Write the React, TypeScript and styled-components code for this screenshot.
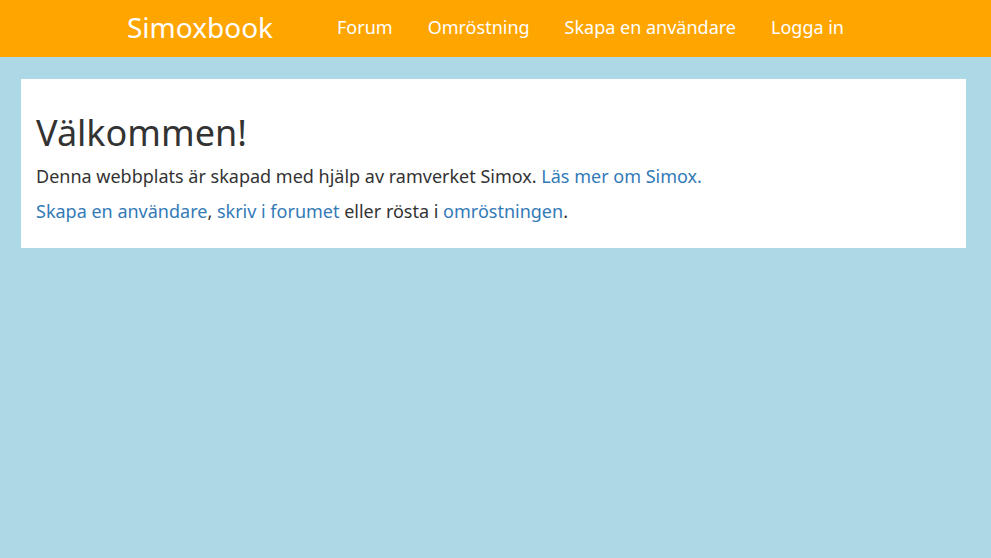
import styled, { createGlobalStyle } from "styled-components";

const GlobalStyle = createGlobalStyle`
  body {
    margin: 0;
    background: lightblue;
    font-family: "Noto Sans", "Open Sans", sans-serif;
    color: #333;
  }
`;

const Navbar = styled.nav`
  background: orange;
  height: 57px;
  box-sizing: border-box;
  padding: 0 0 4px 127px;
  display: flex;
  align-items: center;
`;

const Brand = styled.a`
  color: #fff;
  font-size: 28px;
  text-decoration: none;
  margin-right: 64px;
`;

const NavLinks = styled.ul`
  display: flex;
  gap: 35px;
  list-style: none;
  margin: 0;
  padding: 0;
`;

const NavLink = styled.a`
  color: #fff;
  font-size: 18px;
  text-decoration: none;
`;

const Panel = styled.main`
  background: #fff;
  margin: 22px 25px 0 21px;
  padding: 32px 15px 13px;
`;

const Heading = styled.h1`
  font-size: 36px;
  font-weight: 400;
  margin: 0 0 10px;
  line-height: 1.2;
`;

const Text = styled.p`
  font-size: 18px;
  margin: 0 0 10px;
  line-height: 1.4;
`;

const Link = styled.a`
  color: #337ab7;
  text-decoration: none;
`;

const App = () => {
  return (
    <>
      <GlobalStyle />
      <Navbar>
        <Brand href="#">Simoxbook</Brand>
        <NavLinks>
          <li><NavLink href="#">Forum</NavLink></li>
          <li><NavLink href="#">Omröstning</NavLink></li>
          <li><NavLink href="#">Skapa en användare</NavLink></li>
          <li><NavLink href="#">Logga in</NavLink></li>
        </NavLinks>
      </Navbar>
      <Panel>
        <Heading>Välkommen!</Heading>
        <Text>
          Denna webbplats är skapad med hjälp av ramverket Simox.{" "}
          <Link href="#">Läs mer om Simox.</Link>
        </Text>
        <Text>
          <Link href="#">Skapa en användare</Link>,{" "}
          <Link href="#">skriv i forumet</Link> eller rösta i{" "}
          <Link href="#">omröstningen</Link>.
        </Text>
      </Panel>
    </>
  );
};

export default App;
